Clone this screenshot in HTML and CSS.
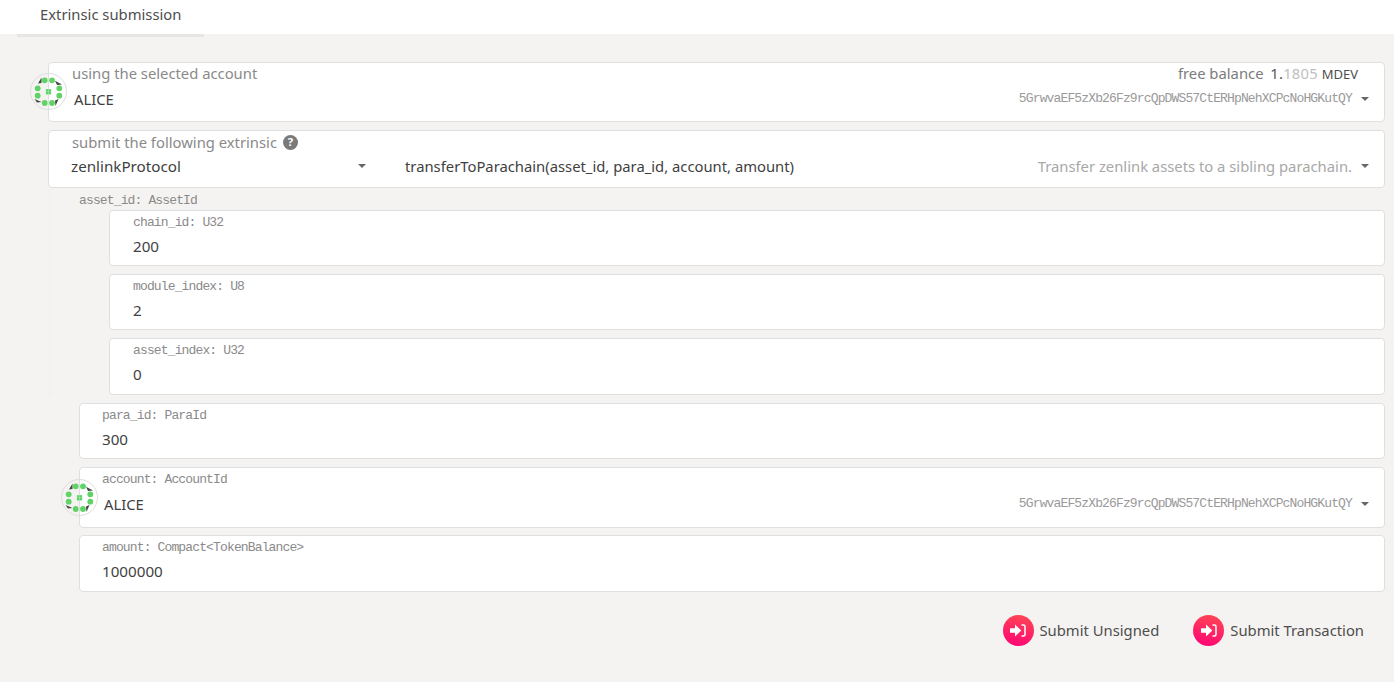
FILE: index.html
```html
<!DOCTYPE html>
<html lang="en">
<head>
<meta charset="utf-8">
<title>Extrinsic submission</title>
<link rel="stylesheet" href="styles.css">
</head>
<body>
<svg class="defs" width="0" height="0" aria-hidden="true">
  <defs>
    <symbol id="identicon" viewBox="0 0 37 37">
      <circle cx="18.5" cy="18.5" r="18" fill="none" stroke="#ddd"/>
      <path d="M11.500 4.500L8 10.500l3.500-.5zM25 7.700l7 3.800-5 .5zM4.500 26l7 3-4.500 .5zM28.500 26l-3 7-.5-5.500z" fill="#444"/>
      <g fill="#5fd365">
        <circle cx="14.700" cy="7.300" r="2.900"/><circle cx="22" cy="7.300" r="2.900"/>
        <circle cx="7.700" cy="15.300" r="2.900"/><circle cx="29.300" cy="15.300" r="2.900"/>
        <circle cx="7.700" cy="22.700" r="2.900"/><circle cx="29.300" cy="22.700" r="2.900"/>
        <circle cx="14.700" cy="30" r="2.900"/><circle cx="22" cy="30" r="2.900"/>
        <rect x="15.800" y="16" width="5.400" height="5.400" fill="#a8e8aa"/>
        <path d="M16 16.200h2.200v2.200h-2.200zM18.800 16.200h2.200v2.200h-2.200zM16 19h2.200v2.200h-2.200zM18.800 19h2.200v2.200h-2.200z"/>
      </g>
    </symbol>
    <symbol id="signin" viewBox="0 0 16 13">
      <path d="M0 4.200h5V.6L11.300 6.500 5 12.400V8.800H0z" fill="#fff"/>
      <path d="M11.500 1h2A1.500 1.500 0 0 1 15 2.500v8A1.500 1.500 0 0 1 13.500 12h-2" fill="none" stroke="#fff" stroke-width="1.500"/>
    </symbol>
  </defs>
</svg>

<header class="tabs">
  <div class="tab">Extrinsic submission</div>
</header>

<main class="page">
  <section class="box box-account">
    <svg class="identicon id-main"><use href="#identicon"/></svg>
    <div class="line">
      <span class="label">using the selected account</span>
      <span class="balance">free balance <b class="bal-num">1.<i class="bal-dec">1805</i></b> <span class="bal-unit">MDEV</span></span>
    </div>
    <div class="line line-value">
      <span class="value value-name">ALICE</span>
      <span class="address">5GrwvaEF5zXb26Fz9rcQpDWS57CtERHpNehXCPcNoHGKutQY</span><span class="caret"></span>
    </div>
  </section>

  <section class="box box-call">
    <div class="label label-call">submit the following extrinsic
      <svg class="help" viewBox="0 0 16 16"><circle cx="8" cy="8" r="8" fill="#7a7a7a"/><text x="8" y="12.200" text-anchor="middle" class="help-mark">?</text></svg>
    </div>
    <div class="call-row">
      <div class="call-section"><span class="value value-digits">zenlinkProtocol</span><span class="caret"></span></div>
      <div class="call-method">
        <span class="value">transferToParachain(asset_id, para_id, account, amount)</span>
        <span class="call-doc">Transfer zenlink assets to a sibling parachain.</span><span class="caret"></span>
      </div>
    </div>
  </section>

  <section class="group">
    <div class="group-label">asset_id: AssetId</div>
    <div class="field"><div class="field-label">chain_id: U32</div><div class="value value-digits">200</div></div>
    <div class="field"><div class="field-label">module_index: U8</div><div class="value value-digits">2</div></div>
    <div class="field"><div class="field-label">asset_index: U32</div><div class="value value-digits">0</div></div>
  </section>

  <section class="params">
    <div class="field"><div class="field-label">para_id: ParaId</div><div class="value value-digits">300</div></div>
    <div class="field field-account">
      <svg class="identicon id-param"><use href="#identicon"/></svg>
      <div class="field-label">account: AccountId</div>
      <div class="line line-param">
        <span class="value value-name">ALICE</span>
        <span class="address">5GrwvaEF5zXb26Fz9rcQpDWS57CtERHpNehXCPcNoHGKutQY</span><span class="caret"></span>
      </div>
    </div>
    <div class="field field-last"><div class="field-label">amount: Compact&lt;TokenBalance&gt;</div><div class="value value-digits">1000000</div></div>
  </section>

  <div class="actions">
    <button class="action" type="button"><span class="action-icon"><svg class="signin"><use href="#signin"/></svg></span><span class="action-text">Submit Unsigned</span></button>
    <button class="action" type="button"><span class="action-icon"><svg class="signin"><use href="#signin"/></svg></span><span class="action-text">Submit Transaction</span></button>
  </div>
</main>
</body>
</html>
```
FILE: styles.css
```css
* { box-sizing: border-box; }
html, body { margin: 0; height: 100%; overflow: hidden; }
body {
  background: #f5f3f1;
  color: #4e4e4e;
  font-family: "Noto Sans", "Open Sans", sans-serif;
  font-size: 14.800px;
}
.defs { position: absolute; }
.tabs { background: #fff; height: 34px; padding-left: 17px; }
.tab {
  width: 187px;
  height: 37px;
  padding: 4px 0 0 23px;
  line-height: 20px;
  border-bottom: 3px solid #e8e6e4;
}
.page { padding: 28px 9px 0 48px; }
.box {
  position: relative;
  background: #fff;
  border: 1px solid #dfdfdf;
  border-radius: 4px;
}
.box-account { height: 60px; padding: 0 15px 0 23px; }
.box-call { height: 58px; margin-top: 8px; padding: 1px 15px 0 23px; }
.line { display: flex; align-items: center; justify-content: space-between; height: 20px; padding-right: 11px; }
.line-value { position: relative; margin-top: 6px; padding-right: 0; justify-content: flex-start; }
.label { color: #8a8a8a; line-height: 20px; }
.label-call { display: flex; align-items: center; gap: 6px; }
.help { width: 15px; height: 15px; }
.help-mark { fill: #fff; font: bold 12px "Noto Sans", sans-serif; }
.value { color: #3f3f3f; line-height: 20px; }
.value-digits { font-size: 15.200px; }
.value-name { margin-left: 2px; }
.balance { color: #7c7c7c; }
.bal-num { font-weight: normal; margin-left: 3px; color: #555; letter-spacing: 0.200px; }
.bal-dec { font-style: normal; color: #c0c0c0; }
.bal-unit { font-size: 13px; color: #4e4e4e; }
.address {
  margin-left: auto;
  margin-top: -2px;
  color: #9a9a9a;
  font-family: "Liberation Mono", monospace;
  font-size: 13px;
  letter-spacing: -0.860px;
}
.line-param .address { margin-top: 0; }
.caret {
  flex: none;
  width: 0;
  height: 0;
  margin-left: 9px;
  border-style: solid;
  border-width: 4px 4px 0;
  border-color: #666 transparent transparent;
}
.call-row { display: flex; margin-top: 4px; }
.call-section { display: flex; align-items: center; justify-content: space-between; width: 295px; margin-left: -1px; }
.call-method { display: flex; align-items: center; flex: 1; margin-left: 39px; }
.call-doc { margin-left: auto; margin-top: -1px; color: #a8a8a8; }
.group {
  margin-bottom: 6px;
  padding: 2px 0 2px 31px;
  background: linear-gradient(90deg, #f3f1ef, #f5f3f1 6px);
}
.group-label, .field-label {
  color: #8a8a8a;
  font-family: "Liberation Mono", monospace;
  font-size: 13px;
  letter-spacing: -0.860px;
  line-height: 16px;
}
.group-label { height: 20px; padding-top: 3px; }
.group .field { margin-left: 30px; }
.group .field:last-child { margin-bottom: 0; }
.field {
  position: relative;
  height: 56.200px;
  margin-bottom: 8px;
  padding: 4px 15px 0 23px;
  background: #fff;
  border: 1px solid #dfdfdf;
  border-radius: 4px;
}
.field > .value { margin-top: 5px; }
.params { padding-left: 31px; }
.params .field { padding-left: 22px; }
.field-account { height: 61px; margin-bottom: 7.500px; }
.field.field-last { height: 57px; }
.line-param { margin-top: 6px; padding-right: 0; justify-content: flex-start; }
.identicon { position: absolute; width: 37px; height: 37px; }
.id-main { left: -19px; top: 10px; }
.id-param { left: -19px; top: 11px; }
.actions { display: flex; justify-content: flex-end; gap: 34px; margin-top: 23px; padding-right: 21px; }
.action {
  display: flex;
  align-items: center;
  gap: 6px;
  padding: 0;
  border: 0;
  background: none;
  color: #4e4e4e;
  font: inherit;
}
.action-text { margin-top: -2px; }
.action-icon {
  display: flex;
  align-items: center;
  justify-content: center;
  width: 31px;
  height: 31px;
  border-radius: 50%;
  background: linear-gradient(15deg, #ff0077, #ff4b50);
}
.signin { width: 16px; height: 13px; }
```
